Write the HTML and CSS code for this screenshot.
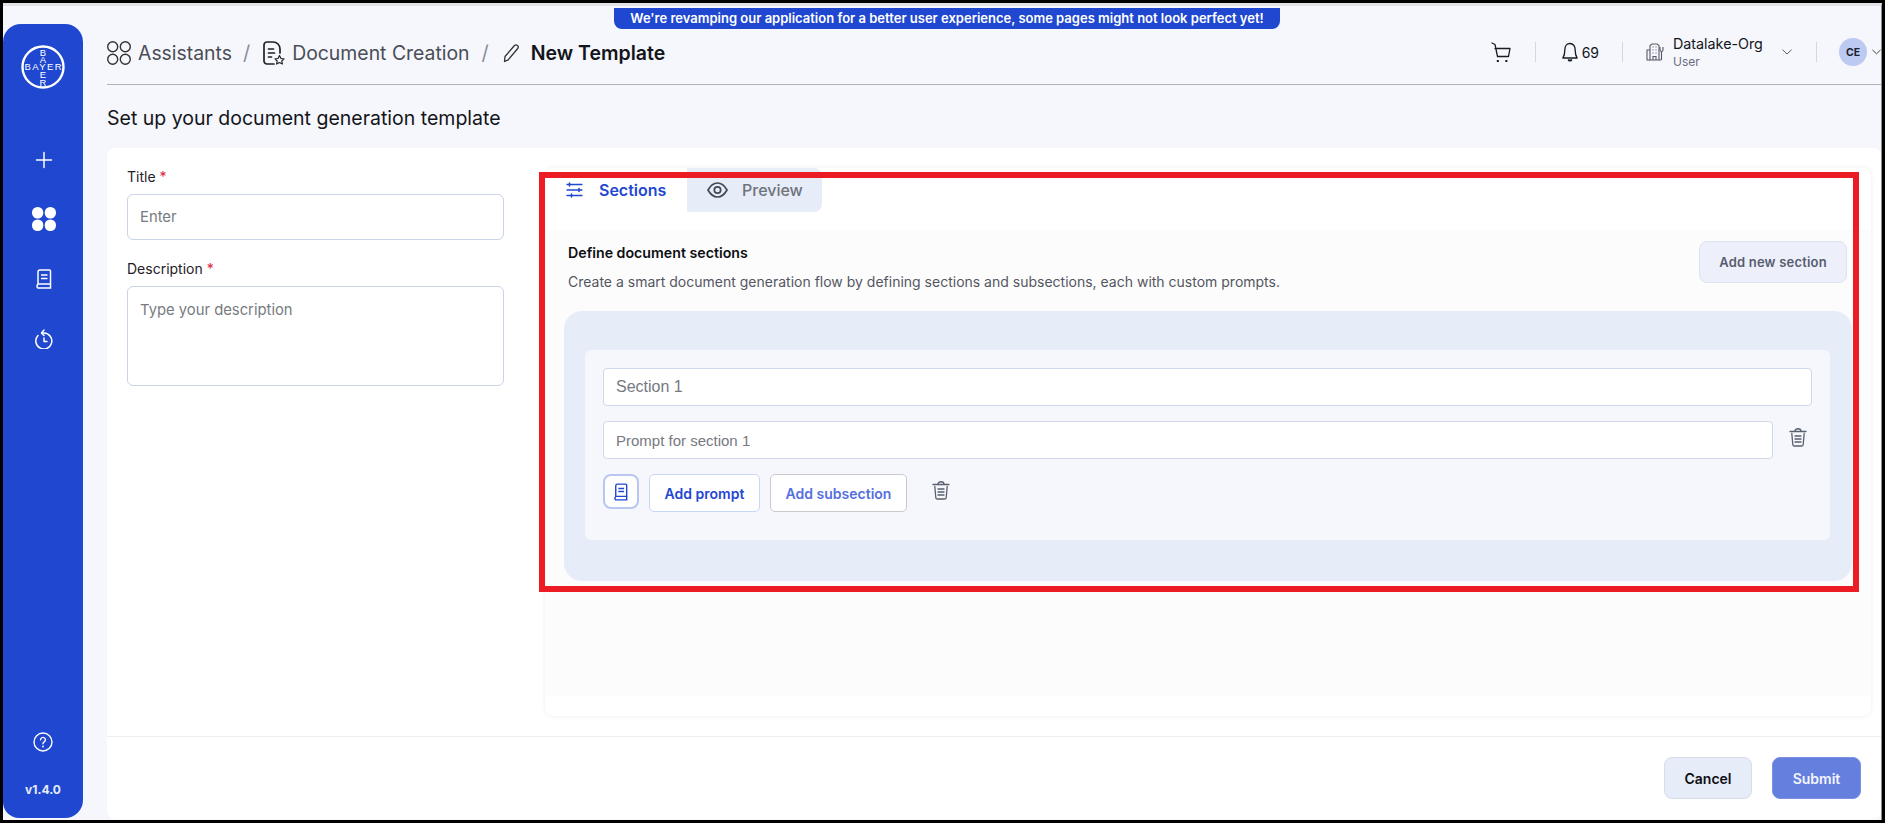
FILE: index.html
```html
<!DOCTYPE html>
<html lang="en">
<head>
<meta charset="utf-8">
<title>New Template</title>
<link rel="stylesheet" href="styles.css">
</head>
<body>
<div class="screen">
  <div class="app">
    <aside class="sidebar">
      <svg class="logo" width="44" height="44" viewBox="0 0 44 44">
        <circle cx="22" cy="22" r="20.5" fill="none" stroke="#fff" stroke-width="2.4"/>
        <text class="logo-text" x="22" y="25.400" text-anchor="middle" textLength="37">BAYER</text>
        <text class="logo-text" x="22" y="10.500" text-anchor="middle">B</text>
        <text class="logo-text" x="22" y="18" text-anchor="middle">A</text>
        <text class="logo-text" x="22" y="33" text-anchor="middle">E</text>
        <text class="logo-text" x="22" y="40.500" text-anchor="middle">R</text>
      </svg>
      <svg class="nav-plus" width="18" height="18" viewBox="0 0 18 18"><path d="M9 1.500v15M1.500 9h15" stroke="#fff" stroke-width="1.500" stroke-linecap="round"/></svg>
      <svg class="nav-grid" width="24" height="24" viewBox="0 0 24 24" fill="#fff"><rect x="0" y="0" width="11.300" height="11.500" rx="5.500"/><rect x="12.700" y="0" width="11.300" height="11.500" rx="5.500"/><rect x="0" y="12.500" width="11.300" height="11.500" rx="5.500"/><rect x="12.700" y="12.500" width="11.300" height="11.500" rx="5.500"/></svg>
      <svg class="nav-book" width="16" height="20" viewBox="0 0 16 20" fill="none" stroke="#fff" stroke-width="1.500"><path d="M2 15V3a2 2 0 0 1 2-2h9.500a1 1 0 0 1 1 1v13z"/><path d="M2 15.500a2 2 0 0 0 0 3.500h12.500v-4"/><path d="M5 6h6.500M5 9.500h6.500"/></svg>
      <svg class="nav-history" width="20" height="20" viewBox="0 0 20 20" fill="none" stroke="#fff" stroke-width="1.500" stroke-linecap="round" stroke-linejoin="round"><path d="M4 6.500a8 8 0 1 0 6-2.500H8"/><path d="M10 1L7.500 4 10 6.500"/><path d="M10 9v3.500h3"/></svg>
      <div class="side-spacer"></div>
      <svg class="nav-help" width="20" height="20" viewBox="0 0 20 20" fill="none" stroke="#fff" stroke-width="1.400" stroke-linecap="round"><circle cx="10" cy="10" r="9"/><path d="M7.600 7.800a2.400 2.400 0 1 1 3.600 2.100c-.8.500-1.200.9-1.200 1.800"/><path d="M10 14.400v.1" stroke-width="1.800"/></svg>
      <div class="version">v1.4.0</div>
    </aside>

    <main class="main">
      <header class="topbar">
        <nav class="crumbs">
          <svg class="crumb-icon" width="24" height="24" viewBox="0 0 24 24" fill="none" stroke="#333" stroke-width="1.400"><rect x=".7" y=".7" width="10" height="10" rx="5"/><rect x="13.300" y=".7" width="10" height="10" rx="5"/><rect x=".7" y="13.300" width="10" height="10" rx="5"/><rect x="13.300" y="13.300" width="10" height="10" rx="5"/></svg>
          <span class="crumb">Assistants</span>
          <span class="slash">/</span>
          <svg class="crumb-doc" width="22" height="24" viewBox="0 0 22 24" fill="none" stroke="#222" stroke-width="1.700" stroke-linecap="round" stroke-linejoin="round"><path d="M11 23H4a3 3 0 0 1-3-3V4a3 3 0 0 1 3-3h6c4 0 7 3 7 7v4"/><path d="M5.500 8h5M5.500 12h6M5.500 16h3"/><path d="M16.500 14.500l1.500 3 3 .4-2.200 2.100.6 3-2.900-1.500-2.900 1.500.6-3L12 17.900l3-.4z" stroke-width="1.200"/></svg>
          <span class="crumb">Document Creation</span>
          <span class="slash slash-second">/</span>
          <svg class="crumb-pencil" width="18" height="20" viewBox="0 0 18 20" fill="none" stroke="#333" stroke-width="1.300" stroke-linejoin="round"><path d="M2 13.500L11.500 2.500a2.200 2.200 0 0 1 3.200 3L5.200 16.800 1.500 18.500z"/></svg>
          <span class="crumb-current">New Template</span>
        </nav>
        <div class="top-actions">
          <svg class="cart" width="20" height="20" viewBox="0 0 20 20" fill="none" stroke="#1b1b22" stroke-width="1.300" stroke-linecap="round" stroke-linejoin="round"><path d="M1 1l3 1.500 2.500 12h11L19 6.500H4"/><path d="M6.500 19h.7M15 19h.7" stroke-width="1.800"/></svg>
          <span class="vsep"></span>
          <svg class="bell" width="16" height="21" viewBox="0 0 18 21" preserveAspectRatio="none" fill="none" stroke="#1b1b22" stroke-width="1.500" stroke-linejoin="round"><path d="M9 1.500c-3.500 0-5.800 2.800-5.800 6.200 0 3.800-.7 6.300-2.200 8.300h16c-1.500-2-2.200-4.500-2.200-8.300 0-3.400-2.300-6.200-5.800-6.200z"/><path d="M7 17.500c.3 1.700 3.700 1.700 4 0" fill="#1b1b22"/></svg>
          <span class="count">69</span>
          <span class="vsep vsep-org"></span>
          <svg class="building" width="18" height="18" viewBox="0 0 18 18" fill="none" stroke="#555a66" stroke-width="1.100"><path d="M4 17V2.500L6 1h5l2 1.500V17z"/><path d="M4 7H1v10h3M13 17h2M15.500 17V9M14 4v3a1.500 1.500 0 0 0 3 0V4"/><path d="M6.500 4h1M9.500 4h1M6.500 7h1M9.500 7h1M6.500 10h1M9.500 10h1M7 17v-3.500h3V17"/></svg>
          <div class="org">
            <div class="org-name">Datalake-Org</div>
            <div class="org-role">User</div>
          </div>
          <svg class="chev" width="10" height="6" viewBox="0 0 10 6" fill="none" stroke="#555a66" stroke-width="1"><path d="M.5.700L5 5 9.500.700"/></svg>
          <span class="vsep vsep-user"></span>
          <div class="avatar">CE</div>
          <svg class="chev chev-user" width="9" height="6" viewBox="0 0 10 6" fill="none" stroke="#333" stroke-width="1"><path d="M.5.700L5 5 9.500.700"/></svg>
        </div>
      </header>

      <h1 class="page-title">Set up your document generation template</h1>

      <section class="card">
        <div class="card-body">
          <div class="form-col">
            <label class="field-label">Title <span class="req">*</span></label>
            <input class="field-input" type="text" placeholder="Enter">
            <label class="field-label field-label-next">Description <span class="req">*</span></label>
            <textarea class="field-area" placeholder="Type your description"></textarea>
          </div>

          <div class="panel">
            <div class="tabs">
              <div class="tab tab-active">
                <svg width="17" height="16" viewBox="0 0 17 16" fill="none" stroke="#1f47d0" stroke-width="1.300" stroke-linecap="round"><path d="M1 2.500h15M1 8h15M1 13.500h15"/><path d="M3.500 1v3M13 6.500v3M5.500 12v3" stroke-width="1.600"/></svg>
                <span>Sections</span>
              </div>
              <div class="tab tab-idle">
                <svg width="21" height="16" viewBox="0 0 21 16" fill="none" stroke="#444a55" stroke-width="1.700"><path d="M1 8c2.500-4.500 5.800-7 9.500-7s7 2.500 9.500 7c-2.500 4.500-5.800 7-9.500 7S3.500 12.500 1 8z"/><circle cx="10.500" cy="8" r="3.200"/></svg>
                <span>Preview</span>
              </div>
            </div>
            <div class="panel-body">
              <div class="panel-head">
                <div class="panel-copy">
                  <div class="panel-title">Define document sections</div>
                  <div class="panel-desc">Create a smart document generation flow by defining sections and subsections, each with custom prompts.</div>
                </div>
                <button class="btn-new">Add new section</button>
              </div>
              <div class="section-box">
                <div class="section-inner">
                  <input class="sec-input" type="text" placeholder="Section 1">
                  <div class="prompt-row">
                    <input class="sec-input sec-input-prompt" type="text" placeholder="Prompt for section 1">
                    <svg class="trash" width="18" height="20" viewBox="0 0 18 20" fill="none" stroke="#5a5f6e" stroke-width="1.300" stroke-linecap="round" stroke-linejoin="round"><path d="M1 4.500h16M6 4c0-3 6-3 6 0"/><path d="M2.800 6.500l1 11a1.500 1.500 0 0 0 1.500 1.500h7.400a1.500 1.500 0 0 0 1.500-1.500l1-11"/><path d="M6 9h6M6 12h6M6 15h6"/></svg>
                  </div>
                  <div class="action-row">
                    <button class="btn-icon"><svg width="14" height="18" viewBox="0 0 16 20" fill="none" stroke="#1f47d0" stroke-width="1.600"><path d="M2 15V3a2 2 0 0 1 2-2h9.500a1 1 0 0 1 1 1v13z"/><path d="M2 15.500a2 2 0 0 0 0 3.500h12.500v-4"/><path d="M5 6h6.500M5 9.500h6.500"/></svg></button>
                    <button class="btn-prompt">Add prompt</button>
                    <button class="btn-sub">Add subsection</button>
                    <svg class="trash trash-section" width="18" height="20" viewBox="0 0 18 20" fill="none" stroke="#5a5f6e" stroke-width="1.300" stroke-linecap="round" stroke-linejoin="round"><path d="M1 4.500h16M6 4c0-3 6-3 6 0"/><path d="M2.800 6.500l1 11a1.500 1.500 0 0 0 1.500 1.500h7.400a1.500 1.500 0 0 0 1.500-1.500l1-11"/><path d="M6 9h6M6 12h6M6 15h6"/></svg>
                  </div>
                </div>
              </div>
            </div>
          </div>
        </div>
        <footer class="card-foot">
          <button class="btn-cancel">Cancel</button>
          <button class="btn-submit">Submit</button>
        </footer>
      </section>
    </main>

    <div class="banner">We're revamping our application for a better user experience, some pages might not look perfect yet!</div>
    <div class="annotation"></div>
  </div>
</div>
</body>
</html>
```

FILE: styles.css
```css
* { box-sizing: border-box; }
html, body { margin: 0; padding: 0; }
body { font-family: Inter, "Liberation Sans", sans-serif; background: #000; overflow: hidden; }
button { font-family: inherit; cursor: pointer; }

.screen { width: 1885px; height: 823px; padding: 3px; }
.app {
  position: relative; display: flex; height: 817px;
  background: #f5f7fc; border-top: 3px solid #e2e3e6; border-right: 1px solid #8c8c90;
}

.sidebar {
  width: 80px; margin: 18px 0 2px; background: #1f47d0; border-radius: 18px 18px 18px 16px;
  display: flex; flex-direction: column; align-items: center; flex: none;
}
.logo { margin-top: 21px; margin-left: -1px; }
.logo-text { font-family: "Liberation Sans", sans-serif; font-size: 9.5px; fill: #fff; }
.nav-plus { margin-top: 62px; margin-left: 2px; }
.nav-grid { margin-top: 38px; margin-left: 1px; }
.nav-book { margin-top: 38px; margin-left: 1px; }
.nav-history { margin-top: 40px; margin-left: 1px; }
.side-spacer { flex: 1; }
.nav-help { margin-bottom: 30px; }
.version { font-size: 12px; font-weight: 700; color: #e6ecf8; line-height: 16px; margin-bottom: 20px; }

.main { flex: 1; min-width: 0; margin: 0 0 1px 24px; display: flex; flex-direction: column; }

.topbar {
  height: 79px; padding-top: 14px; border-bottom: 1px solid #b1b3c1;
  display: flex; align-items: center; justify-content: space-between; flex: none;
}
.crumbs { display: flex; align-items: center; margin-top: 2px; }
.crumb { font-size: 19.4px; color: #4a4d57; margin-left: 7px; line-height: 28px; }
.crumb-icon, .crumb-doc, .crumb-pencil { flex: none; }
.slash { font-size: 20px; color: #8b8e9a; margin: 0 13px 0 11px; }
.slash-second { margin: 0 14px 0 12px; }
.crumb-current { font-size: 19.5px; font-weight: 600; color: #14151a; margin-left: 10px; }

.top-actions { display: flex; align-items: center; }
.vsep { width: 1px; height: 20px; background: #d5d7de; margin: 0 26px 0 24px; }
.vsep-org { margin: 0 23px; }
.vsep-user { margin: 0 22px 0 24px; }
.count { font-size: 14px; color: #14151a; margin-left: 4px; }
.org { margin-left: 9px; width: 100px; }
.org-name { font-size: 14.3px; line-height: 18px; color: #14151a; }
.org-role { font-size: 12px; line-height: 16px; color: #6b6d80; margin-top: 1px; }
.chev { margin-left: 9px; }
.avatar {
  width: 28px; height: 28px; border-radius: 50%; background: #bccaf2; color: #1b1f2e;
  font-size: 10.5px; font-weight: 700; display: flex; align-items: center; justify-content: center;
}
.chev-user { margin-left: 5px; margin-right: 0; }

.page-title { margin: 19px 0 16px; font-size: 19.5px; line-height: 28px; font-weight: 400; color: #14151a; }

.card { flex: 1; min-height: 0; background: #fff; border-radius: 8px; display: flex; flex-direction: column; }
.card-body { height: 589px; display: flex; flex: none; border-bottom: 1px solid #eceef2; }

.form-col { width: 397px; padding: 19px 0 0 20px; flex: none; display: flex; flex-direction: column; }
.field-label { font-size: 14px; line-height: 20px; color: #1f2028; margin-bottom: 7px; }
.field-label-next { margin-top: 19px; }
.req { color: #e0213c; }
.field-input, .field-area {
  width: 377px; border: 1px solid #c9d4e6; border-radius: 6px; background: #fff;
  font-family: Inter, sans-serif; font-size: 14.8px; padding: 0 12px; outline: none; display: block;
}
.field-input { height: 46px; padding-bottom: 1px; }
.field-area { height: 100px; padding-top: 14px; resize: none; }
.field-input::placeholder, .field-area::placeholder { color: #777a80; opacity: 1; }

.panel {
  flex: 1; min-width: 0; margin: 20px 10px 20px 41px; background: #fff; border-radius: 8px;
  box-shadow: 0 0 4px rgba(30, 40, 80, .08); display: flex; flex-direction: column; padding-bottom: 20px;
}
.tabs { display: flex; height: 44px; margin-bottom: 18px; flex: none; }
.tab { display: flex; align-items: center; font-size: 16px; }
.tab-active { width: 142px; padding-left: 21px; gap: 16px; color: #1f47d0; font-weight: 600; }
.tab-idle { width: 135px; padding-left: 20px; gap: 14px; color: #6f737c; font-weight: 500; background: #e6ecf8; border-radius: 0 8px 8px 0; }

.panel-body { flex: 1; background: #fcfcfd; padding: 11px 19px 0; }
.panel-head { display: flex; justify-content: space-between; align-items: flex-start; padding: 0 5px 0 4px; margin-bottom: 19px; height: 51px; }
.panel-copy { padding-top: 2px; }
.panel-title { font-size: 14.2px; font-weight: 600; line-height: 20px; color: #0d0e12; }
.panel-desc { font-size: 14px; line-height: 20px; color: #54565f; margin-top: 9px; }
.btn-new {
  width: 148px; height: 42px; background: #edf0fa; border: 1px solid #dde3f3; border-radius: 8px;
  color: #585c70; font-size: 13px; font-weight: 600; letter-spacing: .2px; padding: 0;
}

.section-box { background: #e6ecf8; border-radius: 18px; padding: 39px 22px 41px 21px; height: 270px; }
.section-inner { background: #f5f7fc; border-radius: 6px; height: 190px; padding: 18px; }
.sec-input {
  width: 100%; height: 38px; background: #fff; border: 1px solid #cdd8ea; border-radius: 4px;
  padding: 0 12px; font-family: "Liberation Sans", sans-serif; font-size: 16px; outline: none; display: block;
}
.sec-input-prompt { font-size: 15px; }
.sec-input::placeholder { color: #77797f; opacity: 1; }
.prompt-row { display: flex; gap: 16px; margin-top: 15px; padding-right: 5px; align-items: flex-start; }
.trash { flex: none; margin-top: 6px; }
.action-row { display: flex; margin-top: 15px; align-items: flex-start; gap: 10px; }
.btn-icon {
  width: 36px; height: 35px; border: 2px solid #b9c6f2; border-radius: 8px; background: #fff;
  padding: 0; display: flex; align-items: center; justify-content: center;
}
.btn-prompt, .btn-sub { height: 38px; border-radius: 5px; background: #fff; font-size: 14px; font-weight: 600; padding: 0; }
.btn-prompt { width: 111px; border: 1px solid #c6d8f5; color: #1f47d0; }
.btn-sub { width: 137px; border: 1px solid #c8cad0; color: #5470dd; }
.trash-section { margin-left: 15px; }

.card-foot { flex: 1; display: flex; justify-content: flex-end; gap: 20px; padding: 20px 20px 0 0; }
.btn-cancel, .btn-submit { height: 42px; border-radius: 8px; font-size: 14px; font-weight: 600; padding: 0; }
.btn-cancel { width: 88px; background: #e6ecf8; border: 1px solid #d8dce6; color: #0d0e12; }
.btn-submit { width: 89px; background: #647fdd; border: 1px solid #7a90e2; color: #f3f5fd; }

.banner {
  position: absolute; left: 611px; top: 2px; width: 666px; height: 21px;
  background: #1f47d0; color: #fff; border-radius: 0 0 8px 8px; text-align: center;
  font-size: 13px; font-weight: 600; line-height: 20px;
}
.annotation { position: absolute; left: 536px; top: 166px; width: 1320px; height: 420px; border: 6px solid #ec1c24; pointer-events: none; }
```
